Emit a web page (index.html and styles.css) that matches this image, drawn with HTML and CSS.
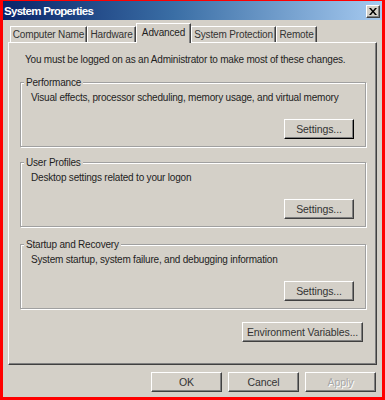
FILE: index.html
```html
<!DOCTYPE html>
<html>
<head>
<meta charset="utf-8">
<link rel="stylesheet" href="styles.css">
</head>
<body>
<div class="window">
  <div class="titlebar">
    <span class="title">System Properties</span>
    <span class="close"><svg width="8" height="7" viewBox="0 0 8 7"><path d="M0 0h2l2 2.5L6 0h2L5 3.5 8 7H6L4 4.5 2 7H0l3-3.5z" fill="#000"/></svg></span>
  </div>
  <div class="body">
    <div class="tabs">
      <div class="tab t1">Computer Name</div>
      <div class="tab t2">Hardware</div>
      <div class="tab t3 active">Advanced</div>
      <div class="tab t4">System Protection</div>
      <div class="tab t5">Remote</div>
    </div>
    <div class="panel">
      <p class="note">You must be logged on as an Administrator to make most of these changes.</p>
      <div class="group g1">
        <span class="legend">Performance</span>
        <p class="desc">Visual effects, processor scheduling, memory usage, and virtual memory</p>
        <div class="row"><button class="btn default">Settings...</button></div>
      </div>
      <div class="group g2">
        <span class="legend">User Profiles</span>
        <p class="desc">Desktop settings related to your logon</p>
        <div class="row"><button class="btn">Settings...</button></div>
      </div>
      <div class="group g3">
        <span class="legend">Startup and Recovery</span>
        <p class="desc">System startup, system failure, and debugging information</p>
        <div class="row"><button class="btn">Settings...</button></div>
      </div>
      <div class="row env"><button class="btn wide">Environment Variables...</button></div>
    </div>
    <div class="actions">
      <button class="btn act">OK</button>
      <button class="btn act">Cancel</button>
      <button class="btn act disabled">Apply</button>
    </div>
  </div>
</div>
</body>
</html>
```

FILE: styles.css
```css
html, body {
  margin: 0;
  padding: 0;
}
body {
  font-family: "Liberation Sans", Arial, sans-serif;
  font-size: 10px;
  letter-spacing: -0.2px;
  color: #1e1e1e;
  background: #fff;
}
.window {
  width: 385px;
  height: 400px;
  box-sizing: border-box;
  border-style: solid;
  border-color: #ff0000;
  border-width: 1px 3px 3px 3px;
  background: #d4d0c8;
  display: flex;
  flex-direction: column;
}
.titlebar {
  height: 19px;
  background: linear-gradient(to right, #0a246a 0%, #3a6ea5 45%, #a6caf0 100%);
  display: flex;
  align-items: center;
  justify-content: space-between;
  padding: 0 2px 0 1px;
  flex-shrink: 0;
}
.title {
  color: #fff;
  font-weight: bold;
  font-size: 11.5px;
  letter-spacing: -0.7px;
}
.close {
  width: 14px;
  height: 13px;
  box-sizing: border-box;
  background: #d4d0c8;
  border-style: solid;
  border-width: 1px;
  border-color: #fff #404040 #404040 #fff;
  box-shadow: inset -1px -1px 0 #808080;
  display: flex;
  align-items: center;
  justify-content: center;
  margin-top: 2px;
}
.body {
  flex: 1;
  padding: 3px 5px 0 5px;
  display: flex;
  flex-direction: column;
}
.tabs {
  display: flex;
  align-items: flex-end;
  height: 19px;
  padding-left: 2px;
  position: relative;
  z-index: 1;
}
.tab {
  height: 16px;
  box-sizing: border-box;
  padding-top: 2px;
  text-align: center;
  border-top: 1px solid #fff;
  border-left: 1px solid #fff;
  border-right: 1px solid #404040;
  box-shadow: inset -1px 0 0 #808080;
  color: #333;
  white-space: nowrap;
  font-size: 10px;
  letter-spacing: -0.15px;
}
.t1 { width: 77px; }
.t2 { width: 49px; }
.t3 { width: 55px; }
.t4 { width: 85px; }
.t5 { width: 41px; }
.tab.active {
  height: 20px;
  padding-top: 3px;
  background: #d4d0c8;
  margin-bottom: -1px;
  color: #1e1e1e;
}
.panel {
  height: 323px;
  box-sizing: border-box;
  border-style: solid;
  border-width: 1px;
  border-color: #fff #404040 #404040 #fff;
  box-shadow: inset -1px -1px 0 #808080;
  padding: 10px 10px 0 11px;
  display: flex;
  flex-direction: column;
}
.note {
  margin: 0 0 0 5px;
  height: 14px;
  line-height: 14px;
  white-space: nowrap;
}
.group {
  height: 65px;
  box-sizing: border-box;
  border: 1px solid #a0a0a0;
  box-shadow: inset 1px 1px 0 #fff, 1px 1px 0 #fff;
  padding: 0 11px 0 10px;
  display: flex;
  flex-direction: column;
}
.g1 { margin-top: 15px; }
.g2 { margin-top: 15px; }
.g3 { margin-top: 17px; }
.legend {
  align-self: flex-start;
  height: 13px;
  line-height: 13px;
  margin: -7px 0 0 -7px;
  padding: 0 2px;
  background: #d4d0c8;
  white-space: nowrap;
}
.desc {
  margin: 2px 0 0 0;
  height: 14px;
  line-height: 14px;
  white-space: nowrap;
}
.row {
  display: flex;
  justify-content: flex-end;
  margin-top: 14px;
}
.btn {
  font-family: "Liberation Sans", Arial, sans-serif;
  font-size: 10.5px;
  letter-spacing: -0.1px;
  color: #333;
  background: #d4d0c8;
  height: 20px;
  width: 70px;
  box-sizing: border-box;
  border-style: solid;
  border-width: 1px;
  border-color: #fff #404040 #404040 #fff;
  box-shadow: inset -1px -1px 0 #808080;
  padding: 0 0 1px 0;
  margin: 0;
  white-space: nowrap;
}
.btn.default {
  border-color: #fff #000 #000 #fff;
}
.row.env {
  margin-top: 13px;
  padding-right: 3px;
}
.btn.wide {
  width: 121px;
}
.actions {
  display: flex;
  justify-content: flex-end;
  gap: 6px;
  padding: 7px 1px 0 0;
}
.btn.act {
  width: 71px;
}
.btn.disabled {
  color: #a8a8a8;
  text-shadow: 1px 1px 0 #fff;
}
```
